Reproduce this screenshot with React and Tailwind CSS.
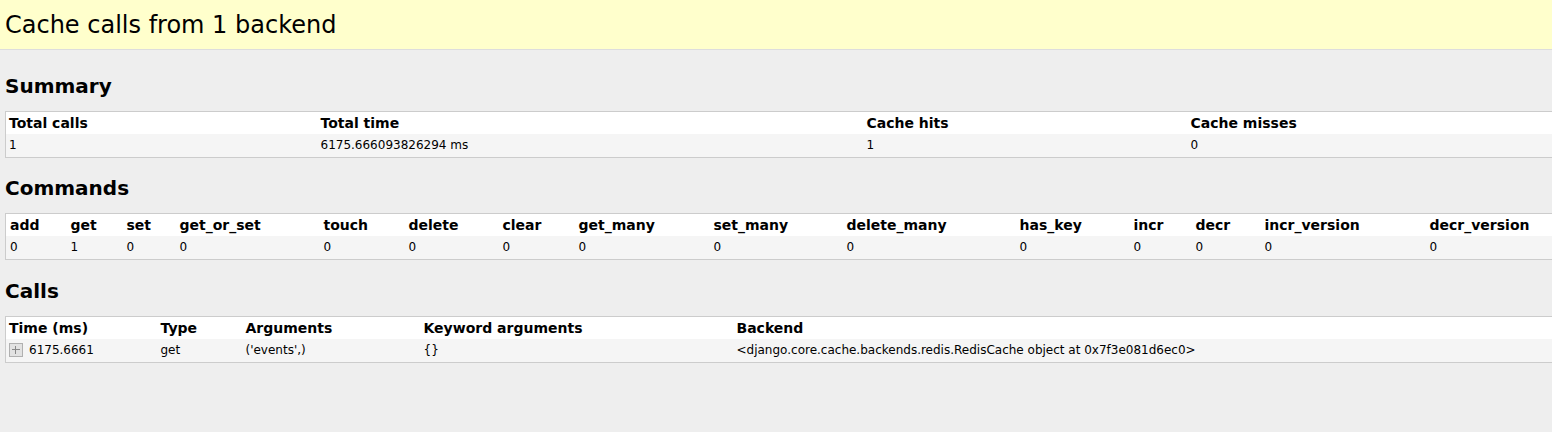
import React from 'react';

const font = { fontFamily: '"DejaVu Sans", Verdana, sans-serif' };

const summaryCols = [
  { h: 'Total calls', v: '1', w: 'w-[312px]' },
  { h: 'Total time', v: '6175.666093826294 ms', w: 'w-[546px]' },
  { h: 'Cache hits', v: '1', w: 'w-[324px]' },
  { h: 'Cache misses', v: '0', w: 'w-[438px]' },
];

const commandCols = [
  ['add', 'w-[61px]'], ['get', 'w-[56px]'], ['set', 'w-[53px]'], ['get_or_set', 'w-[144px]'],
  ['touch', 'w-[85px]'], ['delete', 'w-[94px]'], ['clear', 'w-[76px]'], ['get_many', 'w-[135px]'],
  ['set_many', 'w-[133px]'], ['delete_many', 'w-[173px]'], ['has_key', 'w-[114px]'], ['incr', 'w-[62px]'],
  ['decr', 'w-[69px]'], ['incr_version', 'w-[165px]'], ['decr_version', 'w-[200px]'],
];
const commandVals = { get: '1' };

const Th = ({ children, w, pl = 'pl-[3px]' }) => (
  <th className={`${w} h-[22px] ${pl} pr-1 text-left align-middle text-[14px] font-bold text-black leading-none`}>
    {children}
  </th>
);

const Td = ({ children, w, pl = 'pl-[3px]' }) => (
  <td className={`${w} h-[24px] ${pl} pr-1 text-left align-middle text-[12px] text-black leading-none`}>
    {children}
  </td>
);

const Table = ({ children }) => (
  <table className="table-fixed border-collapse border border-[#ccc] w-[1620px]">{children}</table>
);

const Heading = ({ children, top }) => (
  <h4 className={`text-[20px] font-bold leading-[24px] text-black mb-[13px] ${top}`}>
    {children}
  </h4>
);

const Toggle = () => (
  <span className="inline-block w-[14px] h-[14px] border border-[#b0b0b0] bg-[#e2e2e2] relative align-middle mr-[6px] -mt-[2px]">
    <span className="absolute left-[2px] right-[2px] top-[5px] h-px bg-[#888]" />
    <span className="absolute top-[2px] bottom-[2px] left-[5px] w-px bg-[#888]" />
  </span>
);

export default function App() {
  return (
    <div style={font} className="w-[1552px] h-[432px] overflow-hidden bg-[#eee]">
      <div className="bg-[#ffc] border-b border-[#ddd] pl-[5px] pt-[11px] pb-[10px]">
        <h3 className="text-[24px] leading-[28px] text-black font-normal">Cache calls from 1 backend</h3>
      </div>
      <div className="pl-[5px]">
        <Heading top="mt-[24px]">Summary</Heading>
        <Table>
          <thead>
            <tr className="bg-white">
              {summaryCols.map((c) => <Th key={c.h} w={c.w}>{c.h}</Th>)}
            </tr>
          </thead>
          <tbody>
            <tr className="bg-[#f5f5f5]">
              {summaryCols.map((c) => <Td key={c.h} w={c.w}>{c.v}</Td>)}
            </tr>
          </tbody>
        </Table>

        <Heading top="mt-[18px]">Commands</Heading>
        <Table>
          <thead>
            <tr className="bg-white">
              {commandCols.map(([n, w]) => <Th key={n} w={w} pl="pl-1">{n}</Th>)}
            </tr>
          </thead>
          <tbody>
            <tr className="bg-[#f5f5f5]">
              {commandCols.map(([n, w]) => <Td key={n} w={w} pl="pl-1">{commandVals[n] || '0'}</Td>)}
            </tr>
          </tbody>
        </Table>

        <Heading top="mt-[19px]">Calls</Heading>
        <Table>
          <thead>
            <tr className="bg-white">
              <Th w="w-[152px]">Time (ms)</Th>
              <Th w="w-[85px]">Type</Th>
              <Th w="w-[178px]">Arguments</Th>
              <Th w="w-[313px]">Keyword arguments</Th>
              <Th w="w-[892px]">Backend</Th>
            </tr>
          </thead>
          <tbody>
            <tr className="bg-[#f5f5f5]">
              <Td w="w-[152px]"><Toggle />6175.6661</Td>
              <Td w="w-[85px]">get</Td>
              <Td w="w-[178px]">('events',)</Td>
              <Td w="w-[313px]">{'{}'}</Td>
              <Td w="w-[892px]">{'<django.core.cache.backends.redis.RedisCache object at 0x7f3e081d6ec0>'}</Td>
            </tr>
          </tbody>
        </Table>
      </div>
    </div>
  );
}
